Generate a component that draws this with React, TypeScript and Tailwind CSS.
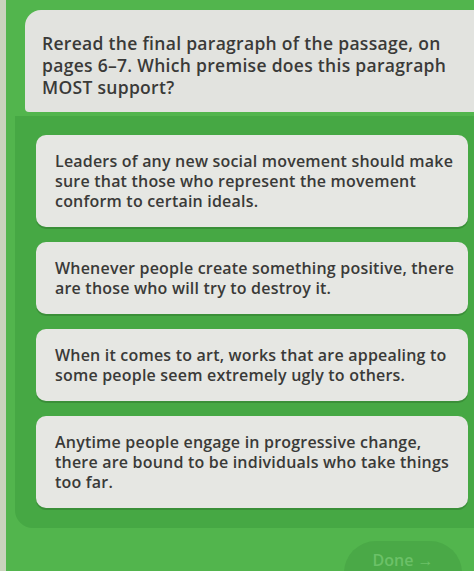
const answers = [
  'Leaders of any new social movement should make sure that those who represent the movement conform to certain ideals.',
  'Whenever people create something positive, there are those who will try to destroy it.',
  'When it comes to art, works that are appealing to some people seem extremely ugly to others.',
  'Anytime people engage in progressive change, there are bound to be individuals who take things too far.',
]

export default function App() {
  return (
    <div
      className="w-[474px] h-[571px] overflow-hidden bg-[#52b54d] flex text-[#3a3a38]"
      style={{ fontFamily: '"Open Sans", "Noto Sans", sans-serif' }}
    >
      <div className="w-[6px] shrink-0 bg-[#c9d3bd]" />
      <div className="flex-1 flex flex-col">
        <div className="shrink-0 ml-[19px] mt-[10px] -mr-[20px] h-[102px] rounded-tl-[16px] rounded-bl-[4px] bg-[#e2e3df] pl-[17px] pr-[30px] pt-[22px]">
          <p className="text-[17.5px] font-semibold leading-[22px] tracking-[0.3px]">
            Reread the final paragraph of the passage, on pages 6–7. Which premise does this paragraph MOST support?
          </p>
        </div>

        <div className="shrink-0 ml-[9px] -mr-[4px] mt-[4px] rounded-bl-[18px] bg-[#46a844] pl-[21px] pr-[10px] pt-[19px] pb-[20px] flex flex-col gap-[15px]">
          {answers.map((a) => (
            <div
              key={a}
              className="rounded-[10px] bg-[#e6e7e3] pl-[19px] pr-[10px] py-[16px] shadow-[0_2px_0_#3a8f38]"
            >
              <p className="text-[16px] font-semibold leading-[20px] tracking-[0.2px]">{a}</p>
            </div>
          ))}
        </div>

        <div className="shrink-0 flex justify-end mt-[13px] pr-[12px]">
          <div className="w-[118px] h-[32px] rounded-t-full bg-[#4aa947] flex items-start justify-center pt-[10px]">
            <span className="text-[16px] font-semibold text-[#6cc168] leading-[18px]">Done →</span>
          </div>
        </div>
      </div>
    </div>
  )
}
